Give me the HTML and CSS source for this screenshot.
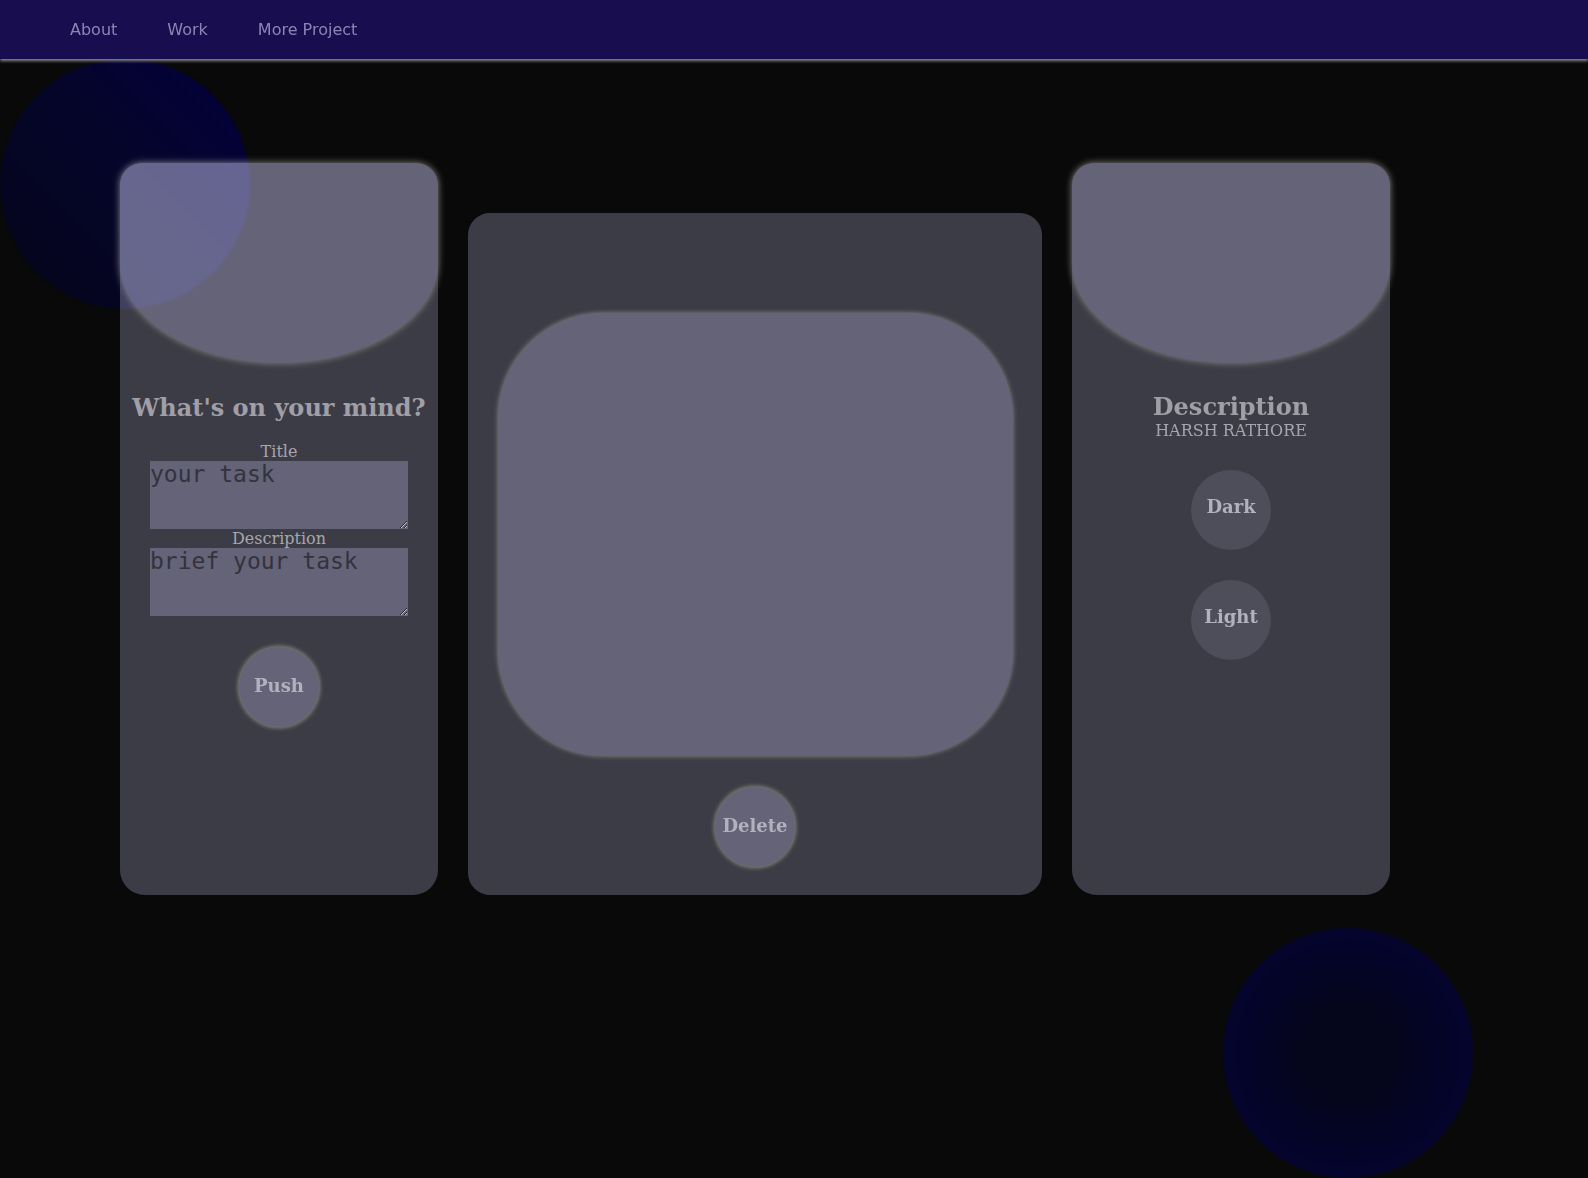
FILE: index.html
```html
<!DOCTYPE html>
<html lang="en">
<head>
<meta charset="utf-8">
<title>Tasks</title>
<link rel="stylesheet" href="styles.css">
</head>
<body>
<nav class="navbar">
  <ul class="nav-list">
    <li><a class="nav-link" href="#">About</a></li>
    <li><a class="nav-link" href="#">Work</a></li>
    <li><a class="nav-link" href="#">More Project</a></li>
  </ul>
</nav>
<main class="board">
  <section class="card card-side">
    <div class="card-head"></div>
    <h2 class="card-title">What's on your mind?</h2>
    <form class="task-form">
      <label class="field-label" for="title">Title</label>
      <textarea class="field" id="title" placeholder="your task"></textarea>
      <label class="field-label" for="desc">Description</label>
      <textarea class="field" id="desc" placeholder="brief your task"></textarea>
      <button type="button" class="round-btn glow">Push</button>
    </form>
  </section>
  <section class="card card-main">
    <div class="screen"></div>
    <button type="button" class="round-btn glow">Delete</button>
  </section>
  <section class="card card-side">
    <div class="card-head"></div>
    <h2 class="card-title title-tight">Description</h2>
    <p class="author">HARSH RATHORE</p>
    <div class="theme-btns">
      <button type="button" class="round-btn plain">Dark</button>
      <button type="button" class="round-btn plain">Light</button>
    </div>
  </section>
</main>
<div class="blob blob-top"></div>
<div class="blob blob-bottom"></div>
</body>
</html>
```
FILE: styles.css
```css
html, body {
  margin: 0;
  padding: 0;
}
body {
  position: relative;
  height: 100vh;
  overflow: hidden;
  background: #090909;
  font-family: "DejaVu Serif", serif;
  isolation: isolate;
}
.navbar {
  position: relative;
  z-index: 3;
  height: 59px;
  background: #170d4f;
  box-shadow: 0 2px 3px #8a8a8a;
  display: flex;
  align-items: center;
}
.nav-list {
  list-style: none;
  margin: 0;
  padding: 0 0 0 70px;
  display: flex;
  gap: 50px;
}
.nav-link {
  font-family: "DejaVu Sans", sans-serif;
  font-size: 16px;
  color: #8a86b4;
  text-decoration: none;
}
.board {
  display: flex;
  align-items: flex-end;
  gap: 30px;
  padding: 104px 0 0 120px;
}
.card {
  background: #3c3c46;
  border-radius: 25px;
  display: flex;
  flex-direction: column;
  align-items: center;
  box-sizing: border-box;
}
.card-side {
  width: 318px;
  height: 732px;
}
.card-main {
  width: 574px;
  height: 682px;
  border-radius: 22px;
  padding-top: 100px;
}
.card-head {
  align-self: stretch;
  height: 200px;
  background: #646378;
  border-radius: 22px 22px 50% 50%;
  box-shadow: 0 0 7px #8a8880;
}
.card-title {
  margin: 30px 0 0;
  font-size: 24px;
  font-weight: bold;
  color: #a09fa8;
  line-height: normal;
}
.title-tight {
  margin-top: 29px;
}
.task-form {
  display: flex;
  flex-direction: column;
  align-items: center;
  margin-top: 20px;
}
.field-label {
  font-size: 16px;
  color: #a8a6af;
  line-height: normal;
}
.field {
  display: block;
  width: 258px;
  height: 68px;
  box-sizing: border-box;
  padding: 0;
  border: none;
  outline: none;
  background: #646378;
  font-family: "DejaVu Sans Mono", monospace;
  font-size: 23px;
  color: #33323d;
}
.field::placeholder {
  color: #33323d;
  opacity: 1;
}
.round-btn {
  width: 80px;
  height: 80px;
  border-radius: 50%;
  border: none;
  padding: 0;
  font-family: "DejaVu Serif", serif;
  font-weight: bold;
  font-size: 18px;
  color: #b2b1bd;
  cursor: pointer;
}
.glow {
  background: #646378;
  box-shadow: 0 0 4px 1px #8c8a7c;
  padding-bottom: 4px;
}
.task-form .round-btn {
  margin-top: 31px;
}
.plain {
  background: #4e4d5a;
  padding-bottom: 8px;
}
.screen {
  width: 515px;
  height: 443px;
  background: #646378;
  border-radius: 105px;
  box-shadow: 0 0 5px #8a8880;
  margin-bottom: 31px;
}
.author {
  margin: 0;
  font-size: 16px;
  color: #a6a5ae;
  line-height: normal;
}
.theme-btns {
  display: flex;
  flex-direction: column;
  gap: 30px;
  margin-top: 30px;
}
.blob {
  position: absolute;
  width: 250px;
  height: 250px;
  border-radius: 50%;
  mix-blend-mode: screen;
  filter: blur(1px);
  z-index: 2;
}
.blob-top {
  left: 0;
  top: 59px;
  background: linear-gradient(225deg, #03003e 0%, #05052a 45%, #06061a 100%);
}
.blob-bottom {
  left: 1223px;
  top: 928px;
  background: radial-gradient(circle at 50% 50%, #05051c 25%, #04043a 100%);
}
```
